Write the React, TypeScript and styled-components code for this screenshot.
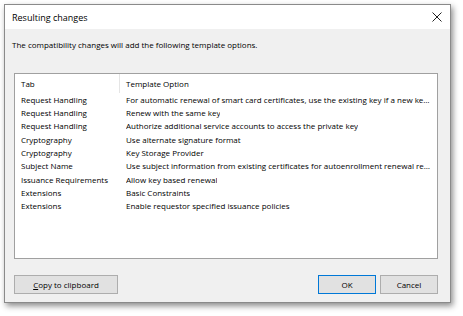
import React from "react";
import styled, { createGlobalStyle } from "styled-components";

const Global = createGlobalStyle`
  html, body { margin: 0; padding: 0; background: #ffffff; }
  body { font-family: "Open Sans", "Noto Sans", sans-serif; color: #000; }
`;

const Stage = styled.div`
  padding: 4px 0 0 4px;
  width: 463px;
  height: 316px;
  box-sizing: border-box;
`;

const Dialog = styled.div`
  width: 447px;
  height: 299px;
  box-sizing: border-box;
  border: 1px solid #8a8a8a;
  background: #f0f0f0;
  box-shadow: 2px 3px 6px rgba(0, 0, 0, 0.45);
  display: flex;
  flex-direction: column;
`;

const TitleBar = styled.div`
  height: 24px;
  background: #ffffff;
  display: flex;
  align-items: center;
  justify-content: space-between;
  padding: 0 8px 0 7px;
  font-size: 9px;
`;

const CloseBtn = styled.div`
  width: 10px;
  height: 10px;
  display: flex;
`;

const Body = styled.div`
  flex: 1;
  display: flex;
  flex-direction: column;
  padding: 10px 12px 8px 9px;
`;

const Intro = styled.div`
  font-size: 8px;
  line-height: 12px;
  margin-left: -2px;
`;

const ListBox = styled.div`
  margin-top: 22px;
  height: 186px;
  box-sizing: border-box;
  border: 1px solid #a0a0a0;
  background: #fff;
  font-size: 8px;
`;

const Row = styled.div<{ $header?: boolean }>`
  display: grid;
  grid-template-columns: 105px 313px;
  height: ${(p) => (p.$header ? "18.6px" : "13.33px")};
  align-items: center;
`;

const Cell = styled.div<{ $sep?: boolean }>`
  padding-left: 6px;
  white-space: nowrap;
  overflow: hidden;
  text-overflow: ellipsis;
  height: 100%;
  display: flex;
  align-items: center;
  box-sizing: border-box;
  border-right: ${(p) => (p.$sep ? "1px solid #e5e5e5" : "none")};
`;

const CellText = styled.span`
  overflow: hidden;
  text-overflow: ellipsis;
  white-space: nowrap;
`;

const Footer = styled.div`
  margin-top: auto;
  display: flex;
  align-items: center;
  gap: 4px;
`;

const Button = styled.button<{ $default?: boolean; $w: number }>`
  width: ${(p) => p.$w}px;
  height: 19px;
  box-sizing: border-box;
  background: #e1e1e1;
  border: 1px solid ${(p) => (p.$default ? "#0078d7" : "#adadad")};
  font-family: inherit;
  font-size: 8px;
  color: #000;
  padding: 0;
`;

const Mnemonic = styled.span`
  text-decoration: underline;
`;

const Spacer = styled.div`
  flex: 1;
`;

const rows: [string, string][] = [
  ["Request Handling", "For automatic renewal of smart card certificates, use the existing key if a new key cannot be created"],
  ["Request Handling", "Renew with the same key"],
  ["Request Handling", "Authorize additional service accounts to access the private key"],
  ["Cryptography", "Use alternate signature format"],
  ["Cryptography", "Key Storage Provider"],
  ["Subject Name", "Use subject information from existing certificates for autoenrollment renewal requests"],
  ["Issuance Requirements", "Allow key based renewal"],
  ["Extensions", "Basic Constraints"],
  ["Extensions", "Enable requestor specified issuance policies"],
];

export default function App() {
  return (
    <Stage>
      <Global />
      <Dialog>
        <TitleBar>
          <span>Resulting changes</span>
          <CloseBtn>
            <svg width="10" height="10" viewBox="0 0 10 10">
              <path d="M0.5 0.5 L9.5 9.5 M9.5 0.5 L0.5 9.5" stroke="#222" strokeWidth="1" />
            </svg>
          </CloseBtn>
        </TitleBar>
        <Body>
          <Intro>The compatibility changes will add the following template options.</Intro>
          <ListBox>
            <Row $header>
              <Cell $sep>Tab</Cell>
              <Cell>Template Option</Cell>
            </Row>
            {rows.map(([tab, opt], i) => (
              <Row key={i}>
                <Cell>{tab}</Cell>
                <Cell>
                  <CellText>{opt}</CellText>
                </Cell>
              </Row>
            ))}
          </ListBox>
          <Footer>
            <Button $w={104}>
              <Mnemonic>C</Mnemonic>opy to clipboard
            </Button>
            <Spacer />
            <Button $w={58} $default>
              OK
            </Button>
            <Button $w={58}>Cancel</Button>
          </Footer>
        </Body>
      </Dialog>
    </Stage>
  );
}
